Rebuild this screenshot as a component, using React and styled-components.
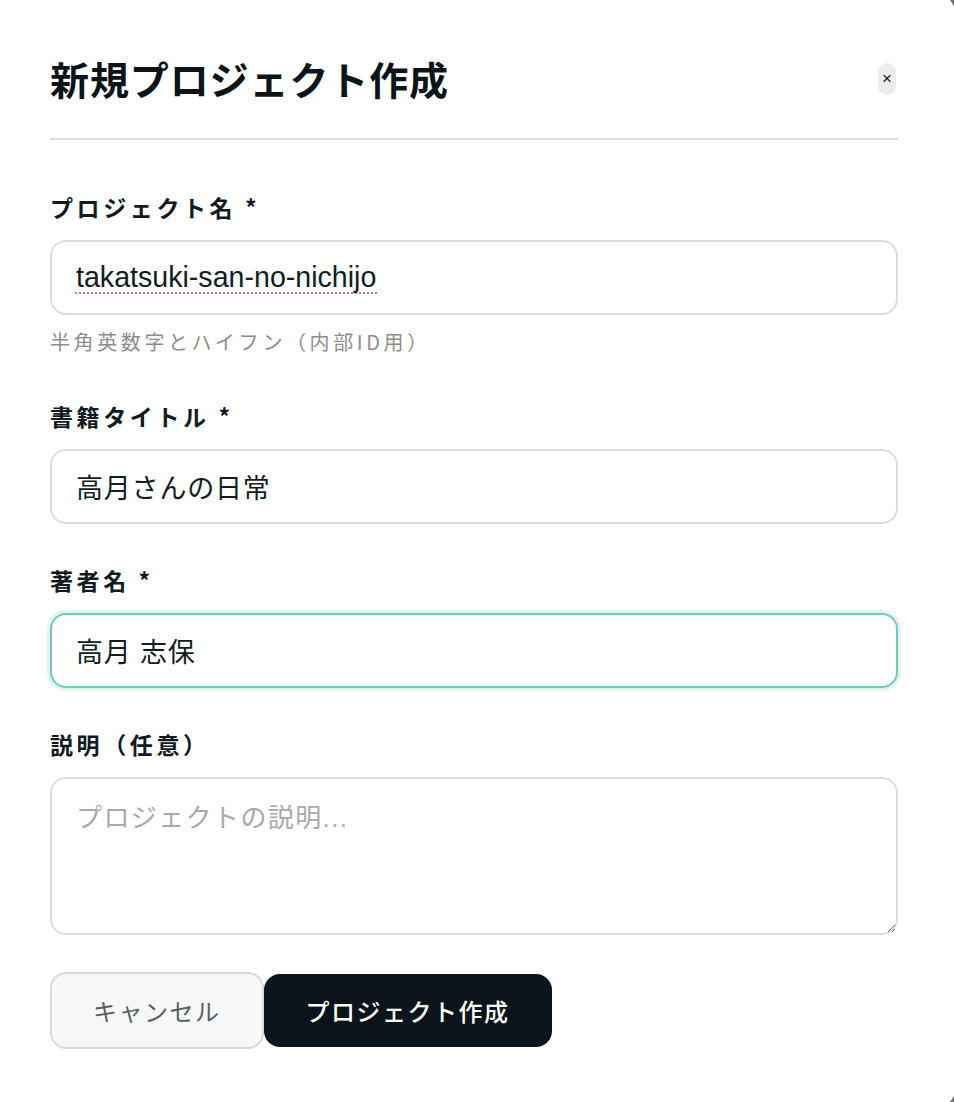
import React from "react";
import styled, { createGlobalStyle, css } from "styled-components";

const Global = createGlobalStyle`
  html, body { margin: 0; padding: 0; background: #707070; overflow: hidden; }
  body { font-family: "Liberation Sans", "Noto Sans CJK JP", sans-serif; }
  * { box-sizing: border-box; }
`;

const Modal = styled.div`
  background: #fff;
  border-radius: 24px;
  margin: -8px 0 0 -10px;
  width: calc(100% + 12px);
  height: 1118px;
  padding: 58px 58px 0 60px;
  display: flex;
  flex-direction: column;
`;

const Header = styled.div`
  display: flex;
  align-items: center;
  justify-content: space-between;
  padding-bottom: 31px;
  border-bottom: 2px solid #dedede;
`;

const Title = styled.h2`
  margin: 0;
  font-family: "Noto Sans CJK JP", sans-serif;
  font-size: 39px;
  line-height: 57px;
  font-weight: 700;
  letter-spacing: 0.9px;
  color: #0b1419;
`;

const CloseButton = styled.button`
  width: 18px;
  height: 32px;
  margin-right: 2px;
  padding: 0;
  border: none;
  border-radius: 9px;
  background: #ececec;
  color: #222;
  font-family: "Liberation Sans", sans-serif;
  font-size: 17px;
  line-height: 32px;
  display: flex;
  align-items: center;
  justify-content: center;
`;

const Form = styled.form`
  display: flex;
  flex-direction: column;
  padding-top: 52px;
`;

const Field = styled.div`
  display: flex;
  flex-direction: column;
  margin-bottom: ${(p) => p.$gap ?? 41}px;
`;

const Label = styled.label`
  font-family: "Noto Sans CJK JP", sans-serif;
  font-size: 23px;
  line-height: 30px;
  font-weight: 700;
  letter-spacing: 3.6px;
  color: #111a1f;
  margin-bottom: 18px;
`;

const squiggle = css`
  background-image: repeating-linear-gradient(
    to right,
    #e27070 0 2px,
    transparent 2px 4px
  );
  background-size: 302px 2px;
  background-position: 23px 50px;
  background-repeat: no-repeat;
`;

const Input = styled.input`
  display: block;
  height: 75px;
  width: 100%;
  border: 2px solid ${(p) => (p.$focus ? "#6ecab9" : "#dcdcdc")};
  box-shadow: ${(p) => (p.$focus ? "0 0 0 3px #e3f4f0" : "none")};
  border-radius: 16px;
  padding: 0 24px;
  outline: none;
  background-color: #fff;
  ${(p) => p.$misspelt && squiggle}
  font-family: "Liberation Sans", "Noto Sans CJK JP", sans-serif;
  font-size: ${(p) => (p.$latin ? 28.6 : 27)}px;
  letter-spacing: ${(p) => (p.$latin ? 0 : 0.8)}px;
  color: #131c21;
`;

const Hint = styled.div`
  font-family: "Noto Sans CJK JP", sans-serif;
  font-size: 20px;
  line-height: 26px;
  letter-spacing: 3.6px;
  color: #8d8d8d;
  margin-top: 14px;
`;

const TextArea = styled.textarea`
  display: block;
  height: 158px;
  width: 100%;
  border: 2px solid #dcdcdc;
  border-radius: 16px;
  padding: 24px 24px;
  outline: none;
  resize: vertical;
  background: #fff;
  font-family: "Liberation Sans", "Noto Sans CJK JP", sans-serif;
  font-size: 26px;
  line-height: 30px;
  letter-spacing: 1.4px;
  color: #131c21;
  &::placeholder { color: #a9a9a9; }
`;

const Actions = styled.div`
  display: flex;
  align-items: center;
  margin-top: 37px;
`;

const Button = styled.button`
  font-family: "Noto Sans CJK JP", sans-serif;
  font-size: 24px;
  letter-spacing: 1.5px;
  border-radius: 16px;
  padding: 0 ${(p) => (p.$primary ? 42 : 41)}px;
  height: ${(p) => (p.$primary ? 73 : 77)}px;
  border: ${(p) => (p.$primary ? "none" : "2px solid #d9d9d9")};
  background: ${(p) => (p.$primary ? "#0a141a" : "#f5f7f9")};
  color: ${(p) => (p.$primary ? "#ffffff" : "#5a5e62")};
  font-weight: ${(p) => (p.$primary ? 500 : 400)};
`;

export default function App() {
  return (
    <>
      <Global />
      <Modal>
        <Header>
          <Title>新規プロジェクト作成</Title>
          <CloseButton aria-label="閉じる">×</CloseButton>
        </Header>
        <Form onSubmit={(e) => e.preventDefault()}>
          <Field $gap={46}>
            <Label>プロジェクト名 *</Label>
            <Input $latin $misspelt defaultValue="takatsuki-san-no-nichijo" spellCheck={false} />
            <Hint>半角英数字とハイフン（内部ID用）</Hint>
          </Field>
          <Field>
            <Label>書籍タイトル *</Label>
            <Input defaultValue="高月さんの日常" />
          </Field>
          <Field>
            <Label>著者名 *</Label>
            <Input $focus defaultValue="高月 志保" />
          </Field>
          <Field $gap={0}>
            <Label>説明（任意）</Label>
            <TextArea placeholder="プロジェクトの説明..." />
          </Field>
          <Actions>
            <Button type="button">キャンセル</Button>
            <Button type="submit" $primary>プロジェクト作成</Button>
          </Actions>
        </Form>
      </Modal>
    </>
  );
}
